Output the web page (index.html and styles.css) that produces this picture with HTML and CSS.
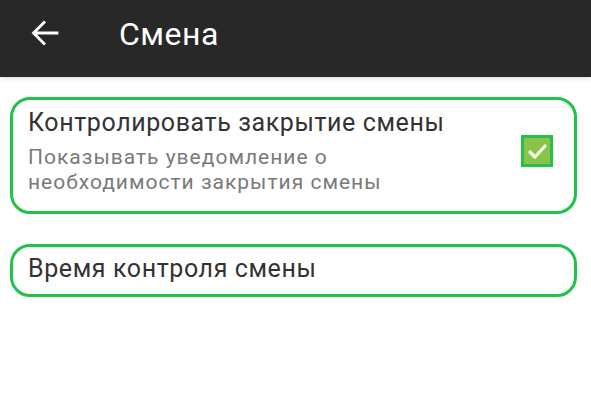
FILE: index.html
```html
<!DOCTYPE html>
<html lang="ru">
<head>
<meta charset="utf-8">
<link rel="stylesheet" href="styles.css">
</head>
<body>
<header class="appbar">
  <svg class="back" width="28" height="26" viewBox="0 0 28 26" aria-hidden="true">
    <path d="M26 13H3M13 2.5L2.5 13L13 23.5" fill="none" stroke="#fff" stroke-width="2.8" stroke-linecap="square" stroke-linejoin="miter"/>
  </svg>
  <h1 class="title">Смена</h1>
</header>
<main class="list">
  <section class="card card-check">
    <div class="texts">
      <div class="item-title">Контролировать закрытие смены</div>
      <div class="item-sub">Показывать уведомление о<br>необходимости закрытия смены</div>
    </div>
    <span class="checkbox">
      <svg width="25" height="25" viewBox="0 0 25 25" aria-hidden="true">
        <path d="M5 13L10 18L20 7" fill="none" stroke="#f4ffe8" stroke-width="3.2" stroke-linecap="round" stroke-linejoin="round"/>
      </svg>
    </span>
  </section>
  <section class="card card-plain">
    <div class="item-title">Время контроля смены</div>
  </section>
</main>
</body>
</html>
```
FILE: styles.css
```css
* { box-sizing: border-box; }
html, body { margin: 0; padding: 0; background: #fff; }
body { font-family: Roboto, "Noto Sans", "Liberation Sans", sans-serif; width: 591px; height: 420px; overflow: hidden; }

.appbar {
  height: 77px;
  background: #282828;
  display: flex;
  align-items: center;
  padding-left: 31px;
  box-shadow: 0 2px 4px rgba(0,0,0,0.12);
  position: relative;
}
.back { display: block; margin-top: -11px; }
.title {
  margin: -10px 0 0 60px;
  font-weight: 400;
  font-size: 32px;
  letter-spacing: 0.5px;
  color: #fff;
  line-height: 40px;
}

.list {
  padding: 20px 14px 0 10px;
  display: flex;
  flex-direction: column;
  gap: 30px;
}
.card {
  border: 3px solid #22c24a;
  border-radius: 20px;
  background: #fff;
}
.card-check {
  height: 117px;
  display: flex;
  align-items: flex-start;
  padding: 10px 21px 0 15px;
}
.texts { flex: 1; }
.item-title {
  font-size: 25px;
  letter-spacing: 0.6px;
  line-height: 26px;
  color: #333;
}
.item-sub {
  font-size: 21px;
  letter-spacing: 1px;
  line-height: 25px;
  color: #7a7a7a;
  margin-top: 9px;
}
.checkbox {
  width: 32px;
  height: 32px;
  margin-top: 25px;
  background: #8bc34a;
  border: 3px solid #22c24a;
  display: flex;
  align-items: center;
  justify-content: center;
}
.card-plain {
  height: 53px;
  padding: 9px 15px 0;
}
```
